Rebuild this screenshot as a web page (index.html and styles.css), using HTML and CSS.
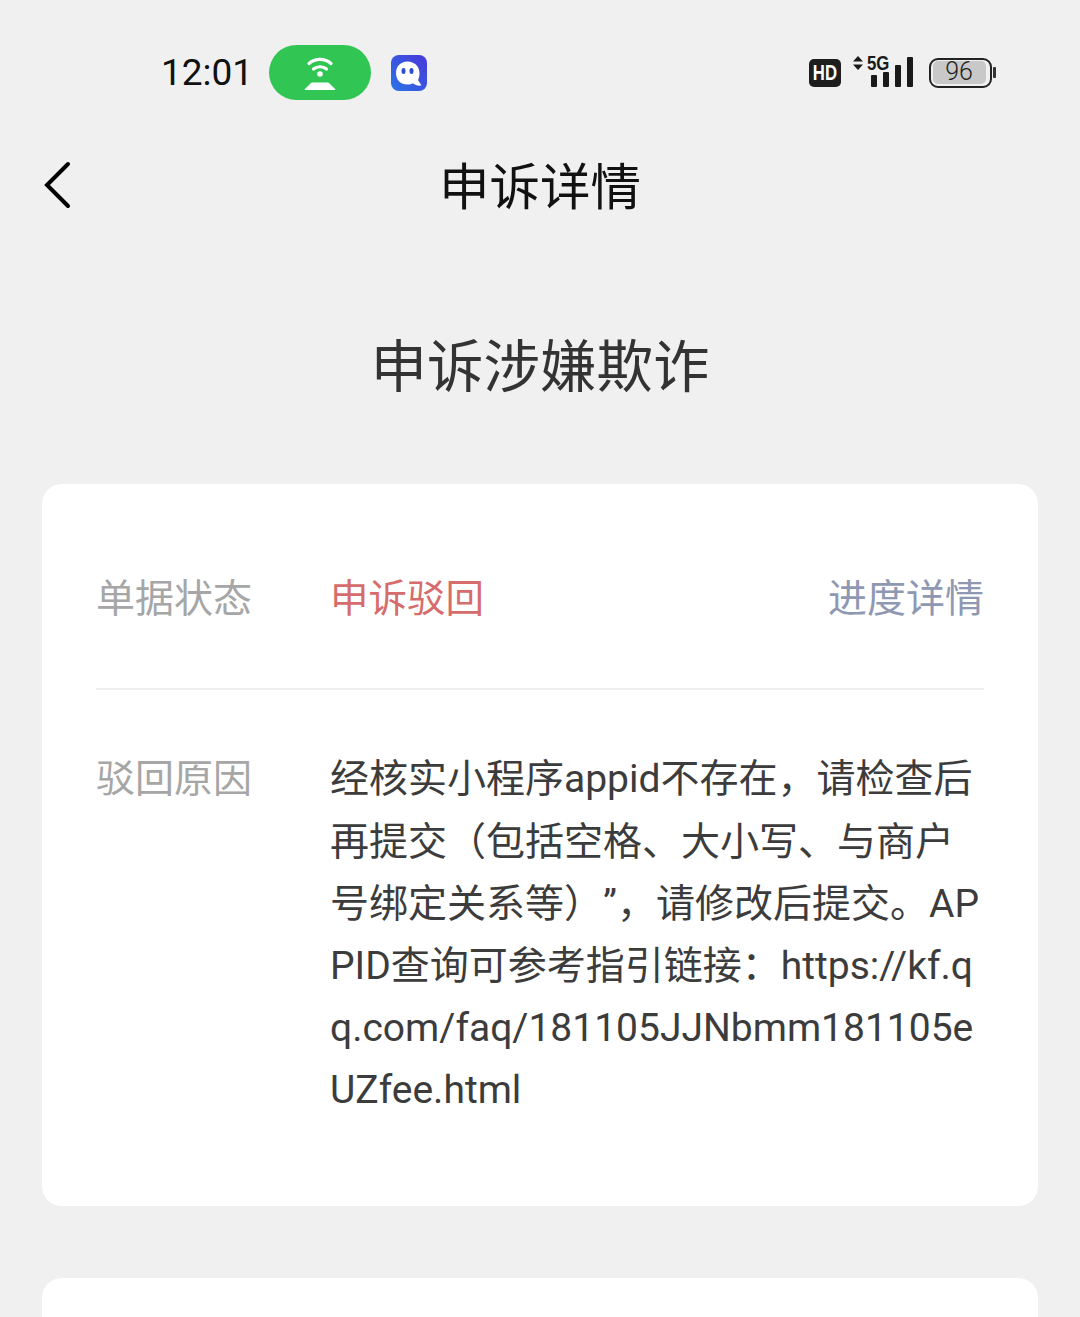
FILE: index.html
```html
<!DOCTYPE html>
<html lang="zh-CN">
<head>
<meta charset="utf-8">
<title>申诉详情</title>
<link rel="stylesheet" href="styles.css">
</head>
<body>
<div class="status-bar">
  <div class="status-left">
    <span class="time">12:01</span>
    <span class="hotspot">
      <svg width="36" height="36" viewBox="0 0 36 36"><path d="M7 8.500C13 3 23 3 29 8.500" fill="none" stroke="#fff" stroke-width="3.200" stroke-linecap="round"/><path d="M11.500 14C15 11 21 11 24.500 14" fill="none" stroke="#fff" stroke-width="3.200" stroke-linecap="round"/><circle cx="18" cy="19" r="2.800" fill="#fff"/><path d="M9.500 28H26.500L33 34.500H3Z" fill="#fff" stroke="#fff" stroke-linejoin="round"/></svg>
    </span>
    <svg class="app-icon" width="36" height="36" viewBox="0 0 36 36">
      <defs><linearGradient id="ag" x1="0" y1="1" x2="1" y2="0"><stop offset="0" stop-color="#2a74e8"/><stop offset="1" stop-color="#4a36d8"/></linearGradient></defs>
      <rect width="36" height="36" rx="8" fill="url(#ag)"/>
      <path d="M16.500 6.500C9.500 6.500 5 11.500 5 18C5 25 9.500 29.500 16.500 29.500C18.500 29.500 20.500 29 22 28.200C24 30 27 31 30.500 30.500L27 25C28 23 28.500 20.500 28.500 18C28.500 11.500 23.500 6.500 16.500 6.500Z" fill="#fff"/>
      <ellipse cx="12.500" cy="16" rx="2" ry="3" fill="#2b4bd8"/><ellipse cx="20.500" cy="16" rx="2" ry="3" fill="#2b4bd8"/>
    </svg>
  </div>
  <div class="status-right">
    <span class="hd"><span class="hd-text">HD</span></span>
    <span class="signal">
      <svg class="arrows" width="10" height="14" viewBox="0 0 10 14"><path d="M5 0L10 5.500H0Z M5 14L0 8.500H10Z" fill="#1a1a1a"/></svg>
      <span class="five-g">5G</span>
      <svg class="bars" width="42" height="30" viewBox="0 0 42 30"><rect x="0" y="18" width="6" height="12" rx="1" fill="#1a1a1a"/><rect x="12" y="15" width="6" height="15" rx="1" fill="#1a1a1a"/><rect x="24" y="8" width="6" height="22" rx="1" fill="#1a1a1a"/><rect x="36" y="0" width="6" height="30" rx="1" fill="#1a1a1a"/></svg>
    </span>
    <span class="battery"><span class="battery-level">96</span></span><span class="battery-cap"></span>
  </div>
</div>

<header class="nav">
  <svg class="back" width="28" height="48" viewBox="0 0 28 48"><path d="M24 3L3 24L24 45" fill="none" stroke="#000" stroke-width="4" stroke-linecap="round" stroke-linejoin="miter"/></svg>
  <h1 class="nav-title">申诉详情</h1>
</header>

<h2 class="page-title">申诉涉嫌欺诈</h2>

<section class="card">
  <div class="row row-status">
    <span class="label">单据状态</span>
    <span class="status">申诉驳回</span>
    <a class="link">进度详情</a>
  </div>
  <div class="row row-reason">
    <span class="label">驳回原因</span>
    <p class="reason">经核实小程序appid不存在，请检查后再提交（包括空格、大小写、与商户号绑定关系等）”，请修改后提交。APPID查询可参考指引链接：https://kf.qq.com/faq/181105JJNbmm181105eUZfee.html</p>
  </div>
</section>
<section class="card card-next"></section>
</body>
</html>
```
FILE: styles.css
```css
* { box-sizing: border-box; }
html, body { margin: 0; height: 1317px; overflow: hidden; }
body {
  background: #f0f0f0;
  font-family: Roboto, "Noto Sans CJK SC", sans-serif;
  color: #333;
  text-spacing-trim: space-all;
}
.status-bar {
  height: 146px;
  padding: 45px 84px 0 161px;
  display: flex;
  justify-content: space-between;
  align-items: flex-start;
}
.status-left { display: flex; align-items: center; height: 55px; }
.time { font-size: 37px; color: #111; width: 108px; }
.hotspot {
  width: 102px; height: 55px; border-radius: 28px;
  background: #31c553;
  display: flex; align-items: center; justify-content: center;
}
.app-icon { margin-left: 20px; }
.status-right { display: flex; align-items: center; height: 55px; }
.hd {
  width: 32px; height: 28px; border-radius: 5px;
  background: #1e1e1e; color: #fff;
  display: flex; align-items: center; justify-content: center;
}
.hd-text {
  font: 700 22px/28px "Liberation Sans", sans-serif;
  display: block;
  transform: scaleX(0.76);
}
.signal { position: relative; width: 60px; height: 33px; margin-left: 12px; display: block; }
.arrows { position: absolute; left: 0; top: 0; }
.five-g {
  position: absolute; left: 14px; top: 0;
  font: 700 21px/14px "Liberation Sans", sans-serif; color: #1a1a1a;
  transform: scaleX(0.8); transform-origin: left center;
}
.bars { position: absolute; left: 18px; top: 1px; }
.battery {
  width: 63px; height: 30px; margin-left: 16px;
  border: 2.500px solid #222; border-radius: 9px;
  padding: 1.500px;
  display: block;
}
.battery-level {
  display: block; height: 100%; width: 53px; border-radius: 5px;
  background: #c8c8c8; color: #222;
  font-size: 25px; line-height: 22px; text-align: center;
  font-weight: 300;
}
.battery-cap { width: 3px; height: 11px; background: #333; margin-left: 1px; border-radius: 1px; }

.nav { position: relative; height: 80px; padding-top: 4px; display: flex; align-items: center; justify-content: center; }
.back { position: absolute; left: 44px; top: 15px; }
.nav-title {
  margin: 0; font-size: 50.500px; font-weight: 400; color: #111; line-height: 76px;
}
.page-title {
  margin: 102px 0 0; font-size: 56.500px; font-weight: 400; color: #333;
  line-height: 80px; text-align: center;
}
.card {
  margin: 76px 42px 0;
  background: #fff;
  border-radius: 20px;
  padding: 0 54px;
  height: 722px;
}
.row { display: flex; font-size: 39px; }
.row-status {
  height: 206px;
  padding-top: 84px;
  border-bottom: 2px solid #eeeeee;
  align-items: flex-start;
}
.label { width: 234px; flex: none; color: #a6a6a6; line-height: 62px; font-weight: 400; }
.status { color: #d66c6c; line-height: 62px; font-size: 38.500px; }
.link { margin-left: auto; color: #8f98b2; line-height: 62px; }
.row-reason { padding-top: 58.400px; }
.reason {
  margin: 0; width: 653px; line-height: 62.200px;
  word-break: break-all; color: #3c3c3c; font-weight: 400;
}
.card-next { margin-top: 72px; height: 200px; }
```
